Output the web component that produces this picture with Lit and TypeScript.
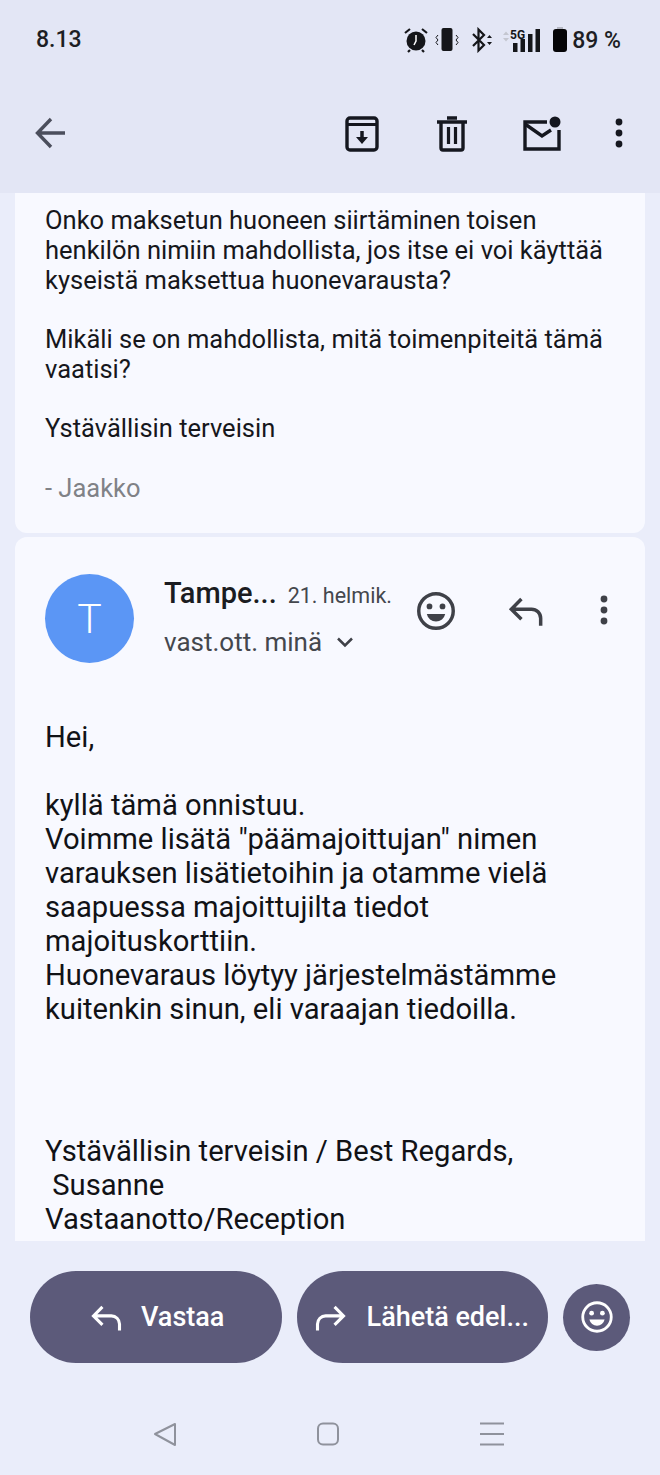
import { LitElement, html, css, svg } from "lit";
import { customElement } from "lit/decorators.js";

const smile = (c: string) => svg`<circle cx="12" cy="12" r="9" fill="none" stroke="${c}" stroke-width="1.8"/><circle cx="8.6" cy="9.6" r="1.5" fill="${c}"/><circle cx="15.4" cy="9.6" r="1.5" fill="${c}"/><path d="M7.2 13.6h9.6a4.9 4.9 0 0 1-9.6 0z" fill="${c}"/>`;
const reply = (c: string, w: number) => svg`<path d="M9.5 5.5 4 11l5.500 5.500M4.500 11H15a5 5 0 0 1 5 5v4" fill="none" stroke="${c}" stroke-width="${w}"/>`;
const forward = (c: string, w: number) => svg`<path d="M14.500 5.500 20 11l-5.500 5.500M19.500 11H9a5 5 0 0 0-5 5v4" fill="none" stroke="${c}" stroke-width="${w}"/>`;
const dots = (c: string) => svg`<circle cx="12" cy="4" r="3.4" fill="${c}"/><circle cx="12" cy="15" r="3.4" fill="${c}"/><circle cx="12" cy="26" r="3.4" fill="${c}"/>`;

@customElement("app-root")
export class AppRoot extends LitElement {
  static styles = css`
    :host { display: block; width: 660px; height: 1475px; overflow: hidden; background: #eaedfa; font-family: Roboto, "Liberation Sans", sans-serif; color: #16171c; }
    * { box-sizing: border-box; }
    svg { display: block; flex: none; }
    .top { height: 193px; background: #e3e6f5; }
    .status { height: 78px; padding: 22px 39px 0 36px; display: flex; justify-content: space-between; }
    .time { font-size: 23px; line-height: 36px; font-weight: 500; color: #1d1e24; }
    .sicons { display: flex; align-items: center; height: 36px; }
    .pct { font-size: 23px; font-weight: 500; margin-left: 4px; color: #1d1e24; }
    .s-alarm { margin-right: 6px; }
    .s-vib { margin-right: 12px; }
    .s-bt { margin-right: 8px; }
    .s-bat { margin-left: 9px; }
    .toolbar { height: 115px; padding: 38px 29px 0 34px; display: flex; align-items: flex-start; justify-content: space-between; }
    .tactions { display: flex; align-items: center; }
    .t-trash { margin-left: 58px; }
    .t-mail { margin-left: 56px; }
    .t-dots { margin-left: 44px; }
    .content { height: 1048px; padding: 0 15px; display: flex; flex-direction: column; gap: 4px; }
    .card { background: #f8f9ff; }
    .c1 { height: 340px; padding: 13px 30px 0; border-radius: 0 0 12px 12px; font-size: 25.5px; line-height: 29.75px; }
    .c1 p { margin: 0 0 29.75px; }
    .sig { color: #808287; }
    .c2 { height: 704px; border-radius: 12px 12px 0 0; padding: 37px 30px 0; }
    .head { display: flex; height: 90px; position: relative; }
    .avatar { width: 89px; height: 89px; border-radius: 50%; background: #5b96f5; color: #fff; display: flex; align-items: center; justify-content: center; font-size: 41px; font-weight: 300; flex: none; }
    .who { margin-left: 30px; width: 230px; }
    .l1 { display: flex; align-items: baseline; height: 42px; line-height: 38px; white-space: nowrap; }
    .name { font-size: 29px; font-weight: 500; color: #1b1c21; }
    .date { font-size: 21.5px; margin-left: 11px; color: #44474d; }
    .l2 { display: flex; align-items: center; font-size: 26px; line-height: 36px; color: #44474d; margin-top: 8px; gap: 13px; }
    .actions { position: absolute; left: 368px; top: 14px; display: flex; align-items: center; }
    .a-reply { margin-left: 45px; }
    .a-dots { margin-left: 44px; }
    .body { margin-top: 56px; font-size: 29.2px; line-height: 34px; color: #111216; white-space: pre-wrap; }
    .sign { margin-top: 108px; }
    .buttons { margin-top: 30px; height: 92px; padding: 0 30px; display: flex; align-items: center; gap: 15px; }
    .btn { width: 252px; height: 92px; border-radius: 46px; background: #5c5a7a; color: #fff; display: flex; align-items: center; font-size: 27px; font-weight: 500; white-space: nowrap; }
    .b1 { padding-left: 57px; gap: 15px; }
    .b2 { padding-left: 14px; gap: 17px; }
    .round { width: 67px; height: 67px; border-radius: 50%; background: #5c5a7a; display: flex; align-items: center; justify-content: center; flex: none; }
    .nav { display: flex; padding: 59px 0 0 153px; gap: 139px; }
    .nav svg + svg + svg { margin-left: 1px; }
  `;

  render() {
    const g = "#3f4148";
    return html`
      <div class="top">
        <div class="status">
          <div class="time">8.13</div>
          <div class="sicons">
            <svg class="s-alarm" width="26" height="26" viewBox="0 0 26 26"><circle cx="13" cy="14" r="9.500" fill="#15161a"/><path d="M13 8v6l-2 4" stroke="#fff" stroke-width="1.500" fill="none"/><path d="M2 6l5-4M24 6l-5-4M7 23l-2 2M19 23l2 2" stroke="#15161a" stroke-width="2.200"/></svg>
            <svg class="s-vib" width="24" height="26" viewBox="0 0 24 26"><rect x="6.500" y="1" width="11" height="23" rx="2" fill="#15161a"/><path d="M3 8l-2 2.500 2 2.500-2 2.500 2 2.500M21 8l2 2.500-2 2.500 2 2.500-2 2.500" stroke="#15161a" stroke-width="1" fill="none"/></svg>
            <svg class="s-bt" width="22" height="26" viewBox="0 0 22 26"><path d="M2 7l11 11-5.500 5.500v-21L13 8 2 19" stroke="#15161a" stroke-width="2.200" fill="none"/><path d="M16 11l2.500-3 2.500 3zM16 15l2.500 3 2.500-3z" fill="#15161a"/></svg>
            <svg width="42" height="28" viewBox="0 0 42 28"><path d="M2 9l3-3.500L8 9zM2 12l3 3.500L8 12z" fill="#c4c6d0"/><text x="9" y="13" font-size="12" font-weight="700" fill="#15161a" font-family="Roboto">5G</text><rect x="12" y="17" width="4.500" height="9" fill="#15161a"/><rect x="19.500" y="13" width="4.500" height="13" fill="#15161a"/><rect x="27" y="8" width="4.500" height="18" fill="#15161a"/><rect x="34.500" y="3" width="4.500" height="23" fill="#15161a"/></svg>
            <svg class="s-bat" width="16" height="26" viewBox="0 0 16 26"><rect x="5" y="0" width="6" height="3" fill="#b5b7c2"/><rect x="1" y="2" width="14" height="23" rx="3" fill="#050507"/></svg>
            <span class="pct">89 %</span>
          </div>
        </div>
        <div class="toolbar">
          <svg width="34" height="34" viewBox="0 0 34 34"><path d="M31 17H4M17 3 3.500 17 17 31" fill="none" stroke="#4b4e5c" stroke-width="3.400"/></svg>
          <div class="tactions">
            <svg width="34" height="36" viewBox="0 0 34 36"><rect x="2" y="2" width="30" height="32" rx="3" fill="none" stroke="#15171f" stroke-width="3.400"/><path d="M2 8.500h30" stroke="#15171f" stroke-width="3"/><path d="M17 15v8" stroke="#15171f" stroke-width="3.500"/><path d="M11 21h12l-6 7z" fill="#15171f"/></svg>
            <svg class="t-trash" width="30" height="36" viewBox="0 0 30 36"><path d="M0 6h30M10 2h10" stroke="#15171f" stroke-width="3.400"/><path d="M4 6v26a2 2 0 0 0 2 2h18a2 2 0 0 0 2-2V6" fill="none" stroke="#15171f" stroke-width="3.400"/><path d="M11.500 11v17M18.500 11v17" stroke="#15171f" stroke-width="3.200"/></svg>
            <svg class="t-mail" width="40" height="36" viewBox="0 0 40 36"><path d="M24 6H2v27h34V14" fill="none" stroke="#15171f" stroke-width="3.400"/><path d="M2 8l17 12 9-6" fill="none" stroke="#15171f" stroke-width="3.400"/><circle cx="32" cy="6" r="5.500" fill="#15171f"/></svg>
            <svg class="t-dots" width="24" height="32" viewBox="0 0 24 32">${dots("#15171f")}</svg>
          </div>
        </div>
      </div>
      <div class="content">
        <div class="card c1">
          <p>Onko maksetun huoneen siirtäminen toisen<br>henkilön nimiin mahdollista, jos itse ei voi käyttää<br>kyseistä maksettua huonevarausta?</p>
          <p>Mikäli se on mahdollista, mitä toimenpiteitä tämä<br>vaatisi?</p>
          <p>Ystävällisin terveisin</p>
          <p class="sig">- Jaakko</p>
        </div>
        <div class="card c2">
          <div class="head">
            <div class="avatar">T</div>
            <div class="who">
              <div class="l1"><span class="name">Tampe...</span><span class="date">21. helmik.</span></div>
              <div class="l2">vast.ott. minä <svg width="20" height="20" viewBox="0 0 20 20"><path d="M3 6.500l7 7 7-7" fill="none" stroke="#3f4148" stroke-width="2.500"/></svg></div>
            </div>
            <div class="actions">
              <svg width="46" height="46" viewBox="0 0 24 24">${smile(g)}</svg>
              <svg class="a-reply" width="44" height="44" viewBox="0 0 24 24">${reply(g, 1.9)}</svg>
              <svg class="a-dots" width="24" height="32" viewBox="0 0 24 32">${dots(g)}</svg>
            </div>
          </div>
          <div class="body"><div>Hei,</div><br><div>kyllä tämä onnistuu.</div><div>Voimme lisätä "päämajoittujan" nimen</div><div>varauksen lisätietoihin ja otamme vielä</div><div>saapuessa majoittujilta tiedot</div><div>majoituskorttiin.</div><div>Huonevaraus löytyy järjestelmästämme</div><div>kuitenkin sinun, eli varaajan tiedoilla.</div><div class="sign">Ystävällisin terveisin / Best Regards,</div><div> Susanne</div><div>Vastaanotto/Reception</div></div>
        </div>
      </div>
      <div class="buttons">
        <div class="btn b1"><svg width="39" height="39" viewBox="0 0 24 24">${reply("#fff", 1.9)}</svg>Vastaa</div>
        <div class="btn b2"><svg width="39" height="39" viewBox="0 0 24 24">${forward("#fff", 1.9)}</svg>Lähetä edel...</div>
        <div class="round"><svg width="38" height="38" viewBox="0 0 24 24">${smile("#fff")}</svg></div>
      </div>
      <div class="nav">
        <svg width="24" height="24" viewBox="0 0 24 24"><path d="M22 2v21L2 12z" fill="none" stroke="#8f929c" stroke-width="2" stroke-linejoin="round"/></svg>
        <svg width="24" height="24" viewBox="0 0 24 24"><rect x="2" y="1.500" width="20" height="21" rx="5" fill="none" stroke="#8f929c" stroke-width="2"/></svg>
        <svg width="24" height="24" viewBox="0 0 24 24"><path d="M0 1.500h24M0 12h24M0 22.500h24" stroke="#8f929c" stroke-width="2"/></svg>
      </div>
    `;
  }
}
